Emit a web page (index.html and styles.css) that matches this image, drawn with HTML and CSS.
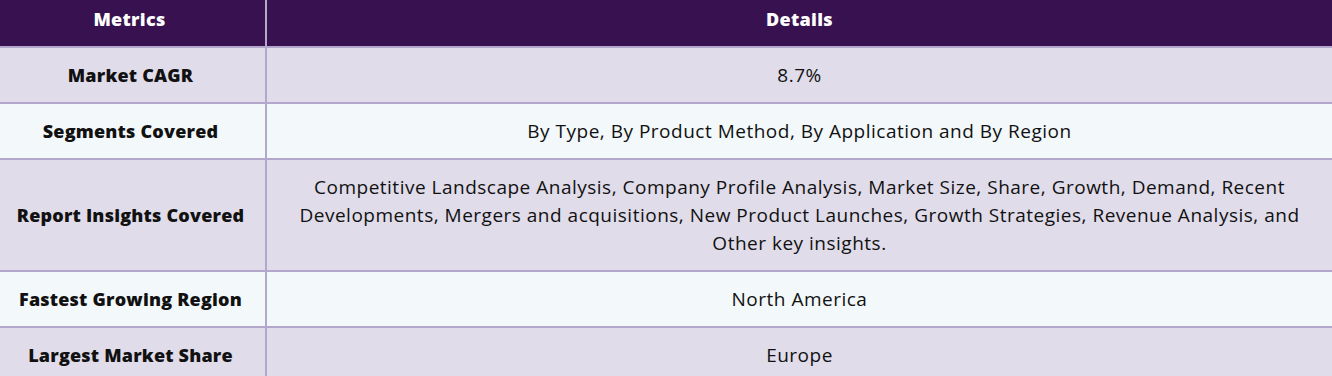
FILE: index.html
```html
<!DOCTYPE html>
<html>
<head>
<meta charset="utf-8">
<link rel="stylesheet" href="styles.css">
</head>
<body>
<table class="metrics">
  <thead>
    <tr><th class="col-m">Metrics</th><th>Details</th></tr>
  </thead>
  <tbody>
    <tr class="odd"><td class="label">Market CAGR</td><td>8.7%</td></tr>
    <tr class="even"><td class="label">Segments Covered</td><td>By Type, By Product Method, By Application and By Region</td></tr>
    <tr class="odd"><td class="label">Report Insights Covered</td><td>Competitive Landscape Analysis, Company Profile Analysis, Market Size, Share, Growth, Demand, Recent Developments, Mergers and acquisitions, New Product Launches, Growth Strategies, Revenue Analysis, and Other key insights.</td></tr>
    <tr class="even"><td class="label">Fastest Growing Region</td><td>North America</td></tr>
    <tr class="odd"><td class="label">Largest Market Share</td><td>Europe</td></tr>
  </tbody>
</table>
</body>
</html>
```
FILE: styles.css
```css
html, body {
  margin: 0;
  padding: 0;
  background: #ffffff;
}
.metrics {
  width: 1332px;
  border-collapse: collapse;
  table-layout: fixed;
  font-family: "Open Sans", "Noto Sans", sans-serif;
  font-size: 19px;
  color: #111;
}
.metrics th {
  background: #371150;
  color: #ffffff;
  font-size: 18px;
  font-weight: 800;
  height: 47px;
  padding: 0 10px 8px;
  text-align: center;
  border-left: 2px solid #b3a8cc;
  border-bottom: 2px solid #b3a8cc;
  letter-spacing: 0.3px;
  box-sizing: border-box;
}
.metrics .col-m {
  width: 266px;
  border-left: none;
  padding-right: 16px;
}
.metrics td {
  text-align: center;
  padding: 13px 20px;
  line-height: 28px;
  letter-spacing: 0.5px;
  border-left: 2px solid #b3a8cc;
  border-bottom: 2px solid #b3a8cc;
}
.metrics td.label {
  border-left: none;
  font-size: 18px;
  font-weight: 800;
  letter-spacing: 0.2px;
  padding: 13px 8px 13px 4px;
}
.odd td { background: #e0dcea; }
.even td { background: #f3f8fb; }
```
